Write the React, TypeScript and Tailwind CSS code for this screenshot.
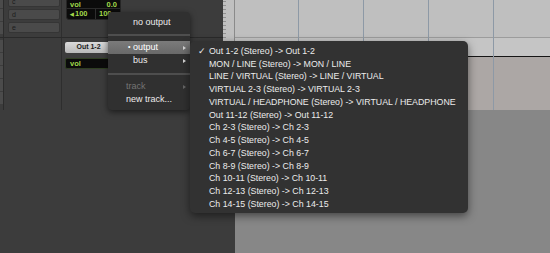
const outputs = [
  'Out 1-2 (Stereo) -> Out 1-2',
  'MON / LINE (Stereo) -> MON / LINE',
  'LINE / VIRTUAL (Stereo) -> LINE / VIRTUAL',
  'VIRTUAL 2-3 (Stereo) -> VIRTUAL 2-3',
  'VIRTUAL / HEADPHONE (Stereo) -> VIRTUAL / HEADPHONE',
  'Out 11-12 (Stereo) -> Out 11-12',
  'Ch 2-3 (Stereo) -> Ch 2-3',
  'Ch 4-5 (Stereo) -> Ch 4-5',
  'Ch 6-7 (Stereo) -> Ch 6-7',
  'Ch 8-9 (Stereo) -> Ch 8-9',
  'Ch 10-11 (Stereo) -> Ch 10-11',
  'Ch 12-13 (Stereo) -> Ch 12-13',
  'Ch 14-15 (Stereo) -> Ch 14-15',
];

const gridCols = [64, 65, 65, 65, 56];

function Arrow({ dim }: { dim?: boolean }) {
  return (
    <svg width="3" height="4" viewBox="0 0 3 4" className={dim ? 'fill-[#666]' : 'fill-[#d4d4d4]'}>
      <path d="M0 0L3 2L0 4z" />
    </svg>
  );
}

function Separator({ h }: { h: string }) {
  return (
    <div className={`flex ${h} items-center`}>
      <div className="h-[2px] w-full bg-[#4e4e4e]" />
    </div>
  );
}

function RouteMenu() {
  return (
    <div className="absolute left-[108px] top-[12px] h-[98px] w-[82px] rounded-[4px] bg-[#303030] pt-[4px] text-[9px] text-[#ececec] shadow-[0_2px_6px_rgba(0,0,0,0.55)]">
      <div className="flex h-[13px] items-center pl-[25px]">no output</div>
      <Separator h="h-[12px]" />
      <div className="flex h-[13px] items-center bg-gradient-to-b from-[#7b7b7b] to-[#696969] pl-[20px] pr-[4px] text-white">
        <span className="w-[5px] text-[7px]">•</span>
        <span className="flex-1">output</span>
        <Arrow />
      </div>
      <div className="flex h-[13px] items-center pl-[25px] pr-[4px]">
        <span className="flex-1">bus</span>
        <Arrow />
      </div>
      <Separator h="h-[13px]" />
      <div className="flex h-[13px] items-center pl-[18px] pr-[4px] text-[#747474]">
        <span className="flex-1">track</span>
        <Arrow dim />
      </div>
      <div className="flex h-[13px] items-center pl-[18px]">new track...</div>
    </div>
  );
}

function OutputMenu() {
  return (
    <div className="absolute left-[190px] top-[41px] h-[172px] w-[278px] rounded-[5px] bg-[#323232] pt-[4px] text-[8.8px] text-[#ececec] shadow-[0_3px_8px_rgba(0,0,0,0.5)]">
      {outputs.map((o, i) => (
        <div key={o} className="flex h-[12.75px] items-center">
          <span className="w-[19px] pl-[8px] text-[9px] font-['DejaVu_Sans',sans-serif]">{i === 0 ? '✓' : ''}</span>
          <span className="whitespace-nowrap">{o}</span>
        </div>
      ))}
    </div>
  );
}

function StripCells({ count, top }: { count: number; top: string }) {
  return (
    <div className={`flex flex-col gap-px ${top}`}>
      {Array.from({ length: count }).map((_, i) => (
        <div key={i} className="h-[12px] w-[3px] bg-[#4b4b4b]" />
      ))}
    </div>
  );
}

export default function App() {
  return (
    <div className="relative flex h-[253px] w-[550px] overflow-hidden bg-[#3c3c3c] font-['Liberation_Sans',sans-serif]">
      {/* edit window tracks */}
      <div className="flex h-[110px] w-[235px] shrink-0">
        <div className="flex w-[223px] flex-col">
          <div className="flex h-[37px] overflow-hidden">
            <div className="border-r border-[#2c2c2c]">
              <StripCells count={3} top="-mt-[4px]" />
            </div>
            <div className="w-[4px]" />
            <div className="-mt-[4px] flex w-[52px] flex-col gap-[2px]">
              {['c', 'd', 'e'].map((n, i) => (
                <div
                  key={n}
                  className={`flex h-[11px] rounded-[2px] border border-[#353535] bg-[#4a4a4a] pl-[3px] text-[7px] leading-none text-[#1c1c1c] ${i === 0 ? 'items-end pb-[1px]' : 'items-center'}`}
                >
                  {n}
                </div>
              ))}
            </div>
            <div className="w-[1px]" />
            <div className="w-px bg-[#2e2e2e]" />
            <div className="w-[4px]" />
            <div className="-mt-[2px] flex h-[22px] w-[55px] flex-col rounded-[3px] border border-[#262626] bg-[#0b0b0b] text-[7.5px] font-bold leading-none text-[#a2d94a]">
              <div className="flex h-[10px] items-center justify-between border-b border-[#2a2a2a] px-[3px] pt-[2px]">
                <span>vol</span>
                <span>0.0</span>
              </div>
              <div className="flex flex-1 items-center">
                <div className="flex h-full w-[29px] items-center border-r border-[#2e2e2e] pl-[3px]">
                  <span className="mr-[1px] text-[5px]">◀</span>100
                </div>
                <div className="pl-[3px]">100</div>
              </div>
            </div>
          </div>
          <div className="h-px bg-[#2a2a2a]" />
          <div className="flex h-[72px]">
            <div className="border-r border-[#2c2c2c]">
              <StripCells count={5} top="mt-[2px]" />
            </div>
            <div className="w-[57px]" />
            <div className="w-px bg-[#2e2e2e]" />
            <div className="flex flex-col pl-[3px] pt-[4px]">
              <div className="flex h-[11px] w-[47px] items-center justify-center rounded-[2px] bg-gradient-to-b from-[#dadada] to-[#b9b9b9] text-[7px] font-bold text-[#1b1b1b]">
                Out 1-2
              </div>
              <div className="mt-[5px] flex h-[11px] w-[47px] items-center rounded-[2px] border border-[#2f3e22] bg-[#0b0b0b] pl-[4px] text-[7.5px] font-bold text-[#a2d94a]">
                vol
              </div>
            </div>
          </div>
        </div>
        {/* ruler */}
        <div className="flex w-[12px] flex-col gap-[3px] overflow-hidden border-r border-[#8a8a8a] bg-[#c0c0c0] pt-[1px]">
          {Array.from({ length: 28 }).map((_, i) => (
            <div key={i} className="h-px w-[3px] shrink-0 bg-[#909090]" />
          ))}
        </div>
      </div>

      {/* timeline grid */}
      <div className="flex flex-1 flex-col bg-[#878787]">
        <div className="flex h-[110px]">
          {gridCols.map((w, i) => (
            <div
              key={i}
              style={{ width: w }}
              className={`flex shrink-0 flex-col ${i < gridCols.length - 1 ? 'border-r border-[#8d99a6]' : ''}`}
            >
              <div className="h-[37px] bg-[#bfbfbf]" />
              <div className="h-px bg-[#9c9c9c]" />
              <div className="h-[18px] bg-[#c5c5c5]" />
              <div className="h-px bg-[#151515]" />
              <div className="flex-1 bg-[#aca7a5]" />
            </div>
          ))}
        </div>
      </div>

      <RouteMenu />
      <OutputMenu />
    </div>
  );
}
